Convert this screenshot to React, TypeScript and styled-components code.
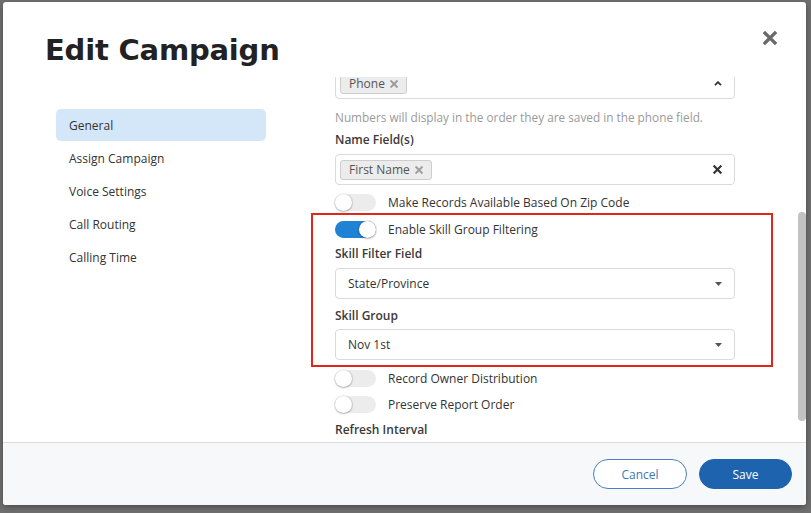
import React, { useLayoutEffect, useRef, useState } from "react";
import styled, { createGlobalStyle, css } from "styled-components";

const GlobalStyle = createGlobalStyle`
  html, body {
    margin: 0;
    padding: 0;
  }
  body {
    width: 811px;
    height: 513px;
    overflow: hidden;
    background: #707070;
    font-family: "Open Sans", "Noto Sans", sans-serif;
    -webkit-font-smoothing: antialiased;
  }
  * {
    box-sizing: border-box;
  }
`;

const Backdrop = styled.div`
  width: 811px;
  height: 513px;
  padding: 2px 5px 8px 3px;
`;

const Modal = styled.div`
  width: 803px;
  height: 503px;
  background: #fff;
  border-radius: 3px;
  box-shadow: 0 2px 6px rgba(0, 0, 0, 0.35);
  display: flex;
  flex-direction: column;
  overflow: hidden;
`;

const Header = styled.div`
  height: 75px;
  flex-shrink: 0;
  display: flex;
  justify-content: space-between;
  align-items: flex-start;
  padding: 0 29px 0 42px;
`;

const Title = styled.h1`
  margin: 0;
  padding-top: 31px;
  font-family: "DejaVu Sans", "Noto Sans", sans-serif;
  font-weight: 700;
  font-size: 29px;
  line-height: 34px;
  color: #222;
  letter-spacing: -0.2px;
`;

const CloseButton = styled.button`
  margin-top: 29px;
  width: 14px;
  height: 14px;
  padding: 0;
  border: 0;
  background: none;
  display: flex;
  cursor: pointer;
`;

const Body = styled.div`
  flex: 1;
  min-height: 0;
  display: flex;
`;

const Nav = styled.nav`
  width: 300px;
  flex-shrink: 0;
  padding: 32px 0 0 53px;
  display: flex;
  flex-direction: column;
  gap: 1px;
`;

const NavItem = styled.div<{ $active?: boolean }>`
  width: 210px;
  height: 32px;
  padding-left: 13px;
  display: flex;
  align-items: center;
  font-size: 12px;
  color: #333;
  border-radius: 5px;
  ${(p) =>
    p.$active &&
    css`
      background: #d4e7f9;
    `}
`;

const Scroller = styled.div`
  flex: 1;
  overflow: hidden;
  padding-left: 32px;
`;

const Rail = styled.div`
  width: 8px;
  flex-shrink: 0;
  display: flex;
  flex-direction: column;
`;

const Thumb = styled.div`
  width: 8px;
  border-radius: 4px;
  background: #c2c2c2;
`;

const Content = styled.div`
  width: 400px;
  padding: 6px 0 4px;
  display: flex;
  flex-direction: column;
`;

const Label = styled.div<{ $mt?: number }>`
  margin-top: ${(p) => p.$mt ?? 0}px;
  font-size: 12px;
  font-weight: 600;
  line-height: 20px;
  color: #3a3a3a;
`;

const HelpText = styled.div<{ $mt?: number }>`
  margin-top: ${(p) => p.$mt ?? 0}px;
  font-size: 11.8px;
  line-height: 18px;
  color: #9a9a9a;
`;

const FieldBox = styled.div<{ $mt?: number }>`
  margin-top: ${(p) => p.$mt ?? 4}px;
  height: 31px;
  border: 1px solid #dadada;
  border-radius: 4px;
  display: flex;
  align-items: center;
  padding: 0 12px 0 4px;
  gap: 6px;
  font-size: 12px;
  color: #333;
`;

const SelectBox = styled(FieldBox)`
  padding-left: 12px;
`;

const Grow = styled.div`
  flex: 1;
  overflow: hidden;
  white-space: nowrap;
`;

const Chip = styled.span`
  height: 20px;
  display: inline-flex;
  align-items: center;
  gap: 5px;
  padding: 0 8px;
  background: #ececec;
  border: 1px solid #cdcdcd;
  border-radius: 3px;
  font-size: 12px;
  color: #555;
`;

const ToggleRow = styled.div<{ $mt?: number }>`
  margin-top: ${(p) => p.$mt ?? 0}px;
  height: 26px;
  display: flex;
  align-items: center;
  gap: 12px;
  font-size: 12px;
  color: #333;
`;

const Track = styled.div<{ $on?: boolean }>`
  width: 41px;
  height: 17px;
  border-radius: 9px;
  display: flex;
  justify-content: ${(p) => (p.$on ? "flex-end" : "flex-start")};
  background: ${(p) => (p.$on ? "#1f82d2" : "#ececec")};
  flex-shrink: 0;
`;

const Knob = styled.div`
  width: 17px;
  height: 17px;
  border-radius: 50%;
  background: #fff;
  box-shadow: 0 0 0 1px rgba(0, 0, 0, 0.08), 0 1px 2px rgba(0, 0, 0, 0.25);
`;

const Highlight = styled.div<{ $mt?: number }>`
  margin-top: ${(p) => p.$mt ?? 0}px;
  position: relative;
  display: flex;
  flex-direction: column;
`;

const Annotation = styled.div`
  position: absolute;
  top: -3px;
  bottom: -7px;
  left: -24px;
  right: -38px;
  border: 2px solid #e1261c;
  pointer-events: none;
`;

const Footer = styled.div`
  height: 63px;
  flex-shrink: 0;
  border-top: 1px solid #dcdcdc;
  background: #f7f8fa;
  display: flex;
  justify-content: flex-end;
  align-items: center;
  gap: 12px;
  padding-right: 14px;
`;

const Button = styled.button<{ $primary?: boolean }>`
  width: ${(p) => (p.$primary ? 93 : 94)}px;
  height: 30px;
  border-radius: 15px;
  font-family: "Open Sans", "Noto Sans", sans-serif;
  font-size: 12px;
  cursor: pointer;
  border: 1px solid ${(p) => (p.$primary ? "#1e63ad" : "#4580c0")};
  background: ${(p) => (p.$primary ? "#1e63ad" : "#fff")};
  color: ${(p) => (p.$primary ? "#fff" : "#3d78b8")};
`;

function XIcon({ size, color, weight }: { size: number; color: string; weight: number }) {
  return (
    <svg width={size} height={size} viewBox="0 0 10 10">
      <path
        d="M1.5 1.5 L8.5 8.5 M8.5 1.5 L1.5 8.5"
        stroke={color}
        strokeWidth={weight}
        strokeLinecap="square"
      />
    </svg>
  );
}

function CaretDown() {
  return (
    <svg width="7" height="4" viewBox="0 0 7 4">
      <path d="M0 0 H7 L3.5 4 Z" fill="#555" />
    </svg>
  );
}

function ChevronUp() {
  return (
    <svg width="8" height="5" viewBox="0 0 8 5">
      <path d="M1 4.2 L4 1.2 L7 4.2" stroke="#333" strokeWidth="1.8" fill="none" />
    </svg>
  );
}

function Toggle({ on, label, mt }: { on?: boolean; label: string; mt?: number }) {
  return (
    <ToggleRow $mt={mt}>
      <Track $on={on}>
        <Knob />
      </Track>
      {label}
    </ToggleRow>
  );
}

function Tag({ text }: { text: string }) {
  return (
    <Chip>
      {text}
      <XIcon size={8} color="#9b9b9b" weight={2.4} />
    </Chip>
  );
}

const navItems = ["General", "Assign Campaign", "Voice Settings", "Call Routing", "Calling Time"];

export default function App() {
  const scrollRef = useRef<HTMLDivElement>(null);
  const phoneRef = useRef<HTMLDivElement>(null);
  const [thumb, setThumb] = useState({ top: 0, height: 0 });

  // the form is scrolled so the phone field sits just under the header
  useLayoutEffect(() => {
    const el = scrollRef.current;
    const phone = phoneRef.current;
    if (el && phone) {
      el.scrollTop = phone.offsetTop - el.offsetTop + phone.offsetHeight - 22;
      const ch = el.clientHeight;
      const sh = el.scrollHeight;
      setThumb({ top: (el.scrollTop / sh) * ch, height: (ch * ch) / sh });
    }
  }, []);

  return (
    <>
      <GlobalStyle />
      <Backdrop>
        <Modal>
          <Header>
            <Title>Edit Campaign</Title>
            <CloseButton aria-label="Close">
              <XIcon size={14} color="#6a6a6a" weight={2.4} />
            </CloseButton>
          </Header>
          <Body>
            <Nav>
              {navItems.map((item, i) => (
                <NavItem key={item} $active={i === 0}>
                  {item}
                </NavItem>
              ))}
            </Nav>
            <Scroller ref={scrollRef}>
              <Content>
                <Label>Campaign Name</Label>
                <SelectBox>
                  <Grow>Nov 1st Outreach</Grow>
                </SelectBox>
                <Label $mt={10}>Description</Label>
                <SelectBox>
                  <Grow>Follow-up calls</Grow>
                </SelectBox>
                <Label $mt={10}>Caller ID</Label>
                <SelectBox>
                  <Grow>Default</Grow>
                  <CaretDown />
                </SelectBox>
                <Label $mt={10}>Phone Field(s)</Label>
                <FieldBox ref={phoneRef}>
                  <Tag text="Phone" />
                  <Grow />
                  <ChevronUp />
                </FieldBox>
                <HelpText $mt={9}>
                  Numbers will display in the order they are saved in the phone field.
                </HelpText>
                <Label $mt={4}>Name Field(s)</Label>
                <FieldBox>
                  <Tag text="First Name" />
                  <Grow />
                  <XIcon size={9} color="#333" weight={2.4} />
                </FieldBox>
                <Toggle mt={4} label="Make Records Available Based On Zip Code" />
                <Highlight $mt={1}>
                  <Toggle on label="Enable Skill Group Filtering" />
                  <Label $mt={2}>Skill Filter Field</Label>
                  <SelectBox>
                    <Grow>State/Province</Grow>
                    <CaretDown />
                  </SelectBox>
                  <Label $mt={7}>Skill Group</Label>
                  <SelectBox $mt={3}>
                    <Grow>Nov 1st</Grow>
                    <CaretDown />
                  </SelectBox>
                  <Annotation />
                </Highlight>
                <Toggle mt={5} label="Record Owner Distribution" />
                <Toggle label="Preserve Report Order" />
                <Label $mt={3}>Refresh Interval</Label>
                <SelectBox $mt={3}>
                  <Grow>30 seconds</Grow>
                  <CaretDown />
                </SelectBox>
              </Content>
            </Scroller>
            <Rail>
              <Thumb style={{ marginTop: thumb.top, height: thumb.height }} />
            </Rail>
          </Body>
          <Footer>
            <Button>Cancel</Button>
            <Button $primary>Save</Button>
          </Footer>
        </Modal>
      </Backdrop>
    </>
  );
}
